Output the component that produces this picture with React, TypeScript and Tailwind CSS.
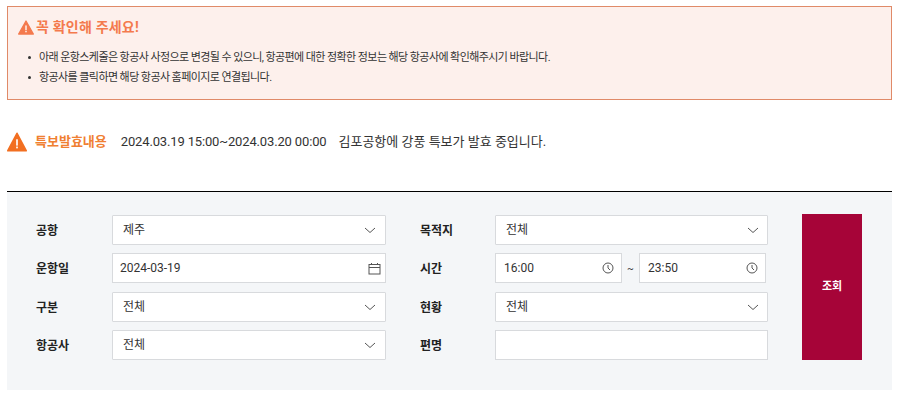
import React from "react";

const font = { fontFamily: '"Roboto","Noto Sans CJK KR",sans-serif' };

function Warn({ w, h, color }: { w: number; h: number; color: string }) {
  return (
    <svg width={w} height={h} viewBox="0 0 24 22" preserveAspectRatio="none" className="shrink-0">
      <path d="M12 1.5 23 20.5H1Z" fill={color} stroke={color} strokeWidth="2" strokeLinejoin="round" />
      <rect x="11" y="8" width="2" height="7" fill="#fff" />
      <rect x="11" y="16" width="2" height="2" fill="#fff" />
    </svg>
  );
}

function Chevron() {
  return (
    <svg width="12" height="7" viewBox="0 0 12 7" fill="none" stroke="#555" strokeWidth="1" className="shrink-0">
      <path d="M1 1l5 4.5L11 1" />
    </svg>
  );
}

function Clock() {
  return (
    <svg width="12" height="12" viewBox="0 0 12 12" fill="none" stroke="#555" strokeWidth="1" className="shrink-0">
      <circle cx="6" cy="6" r="5" />
      <path d="M6 3v3l2 2" />
    </svg>
  );
}

function Calendar() {
  return (
    <svg width="13" height="13" viewBox="0 0 13 13" fill="none" stroke="#555" strokeWidth="1" className="shrink-0">
      <rect x="1" y="2.5" width="11" height="9.5" />
      <path d="M1 5.5h11M3.5 1v2M9.5 1v2" />
    </svg>
  );
}

function Select({ value, right }: { value: string; right?: boolean }) {
  return (
    <div className={right
      ? "flex h-[30px] w-full items-center justify-between rounded-[1px] border border-[#d8dadd] bg-white pl-[10px] pr-[8px] text-[12px] text-[#333]"
      : "flex h-[30px] w-full items-center justify-between rounded-[1px] border border-[#d8dadd] bg-white pl-[10px] pr-[9px] text-[12px] text-[#333]"}>
      <span className="-mt-[1px]">{value}</span>
      <Chevron />
    </div>
  );
}

function Label({ children }: { children: React.ReactNode }) {
  return <div className="pt-[1px] text-[12px] font-bold leading-[30px] text-[#222]">{children}</div>;
}

function TimeBox({ value }: { value: string }) {
  return (
    <div className="flex h-[30px] w-[127px] items-center justify-between border border-[#d8dadd] bg-white pl-[8px] pr-[7px] text-[12px] text-[#333]">
      <span className="-mt-[1px]">{value}</span>
      <Clock />
    </div>
  );
}

export default function App() {
  return (
    <div style={font} className="h-[400px] w-[901px] overflow-hidden bg-white px-[7px] pt-[6px]">
      <div className="h-[94px] w-[885px] border border-[#e08a68] bg-[#fdf0ec] pl-[10px] pt-[10px]">
        <div className="flex items-center gap-[2px]">
          <Warn w={16} h={15} color="#f47a4d" />
          <span className="text-[14px] font-bold tracking-[0.2px] text-[#f47a4d]">꼭 확인해 주세요!</span>
        </div>
        <ul className="mt-[11px] flex flex-col gap-[3px] text-[11px] leading-[17px] tracking-[-0.58px] text-[#333]">
          <li className="flex items-center gap-[8px] pl-[10px]">
            <span className="h-[3px] w-[3px] rounded-full bg-[#333]" />
            아래 운항스케줄은 항공사 사정으로 변경될 수 있으니, 항공편에 대한 정확한 정보는 해당 항공사에 확인해주시기 바랍니다.
          </li>
          <li className="flex items-center gap-[8px] pl-[10px]">
            <span className="h-[3px] w-[3px] rounded-full bg-[#333]" />
            항공사를 클릭하면 해당 항공사 홈페이지로 연결됩니다.
          </li>
        </ul>
      </div>

      <div className="mt-[31px] flex h-[22px] items-center text-[13px] text-[#333]">
        <Warn w={20} h={20} color="#f26f21" />
        <span className="ml-[8px] font-bold text-[#f08032]">특보발효내용</span>
        <span className="ml-[14px] tracking-[-0.15px]">2024.03.19 15:00~2024.03.20 00:00</span>
        <span className="ml-[12px]">김포공항에 강풍 특보가 발효 중입니다.</span>
      </div>

      <div className="mt-[38px] flex h-[199px] w-[885px] border-t border-black bg-[#f4f6f8] pl-[29px] pt-[22px]">
        <div className="grid grid-cols-[76px_274px_34px_75px_273px] grid-rows-[30px_31px_30px_30px] items-start gap-y-[8px] pt-[1px]">
          <Label>공항</Label>
          <Select value="제주" />
          <div className="col-start-4"><Label>목적지</Label></div>
          <div className="col-start-5"><Select value="전체" right /></div>

          <Label>운항일</Label>
          <div className="flex h-[30px] w-[274px] items-center justify-between border border-[#d8dadd] bg-white pl-[7px] pr-[4px] text-[12px] text-[#333]">
            <span className="-mt-[1px]">2024-03-19</span>
            <Calendar />
          </div>
          <div className="col-start-4"><Label>시간</Label></div>
          <div className="col-start-5 flex w-[273px] items-center gap-[5px]">
            <TimeBox value="16:00" />
            <span className="w-[7px] text-[10px] text-[#333]">~</span>
            <TimeBox value="23:50" />
          </div>

          <Label>구분</Label>
          <Select value="전체" />
          <div className="col-start-4"><Label>현황</Label></div>
          <div className="col-start-5"><Select value="전체" right /></div>

          <Label>항공사</Label>
          <Select value="전체" />
          <div className="col-start-4"><Label>편명</Label></div>
          <div className="col-start-5 h-[30px] w-[273px] border border-[#d8dadd] bg-white" />
        </div>
        <div className="ml-[34px] flex h-[146px] w-[60px] items-center justify-center bg-[#a60438] text-[11px] font-bold text-white">
          조회
        </div>
      </div>
    </div>
  );
}
